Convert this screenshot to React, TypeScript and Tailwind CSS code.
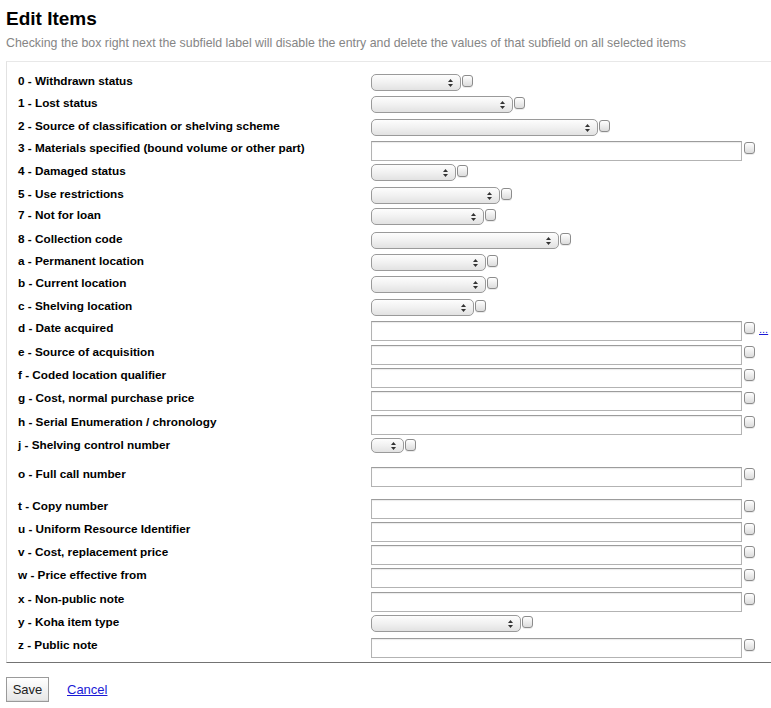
import React from "react";

type Row = {
  label: string;
  kind: "select" | "input";
  w?: string; // select width class
  h: string; // row height class
  small?: boolean;
  dots?: boolean;
};

const rows: Row[] = [
  { label: "0 - Withdrawn status", kind: "select", w: "w-[90px]", h: "h-[22px]" },
  { label: "1 - Lost status", kind: "select", w: "w-[142px]", h: "h-[23px]" },
  { label: "2 - Source of classification or shelving scheme", kind: "select", w: "w-[227px]", h: "h-[22px]" },
  { label: "3 - Materials specified (bound volume or other part)", kind: "input", h: "h-[23px]" },
  { label: "4 - Damaged status", kind: "select", w: "w-[85px]", h: "h-[23px]" },
  { label: "5 - Use restrictions", kind: "select", w: "w-[129px]", h: "h-[21px]" },
  { label: "7 - Not for loan", kind: "select", w: "w-[113px]", h: "h-[24px]" },
  { label: "8 - Collection code", kind: "select", w: "w-[188px]", h: "h-[22px]" },
  { label: "a - Permanent location", kind: "select", w: "w-[115px]", h: "h-[22px]" },
  { label: "b - Current location", kind: "select", w: "w-[115px]", h: "h-[23px]" },
  { label: "c - Shelving location", kind: "select", w: "w-[103px]", h: "h-[22px]" },
  { label: "d - Date acquired", kind: "input", h: "h-[24px]", dots: true },
  { label: "e - Source of acquisition", kind: "input", h: "h-[23px]" },
  { label: "f - Coded location qualifier", kind: "input", h: "h-[23px]" },
  { label: "g - Cost, normal purchase price", kind: "input", h: "h-[24px]" },
  { label: "h - Serial Enumeration / chronology", kind: "input", h: "h-[23px]" },
  { label: "j - Shelving control number", kind: "select", w: "w-[33px]", h: "h-[29px]", small: true },
  { label: "o - Full call number", kind: "input", h: "h-[32px]" },
  { label: "t - Copy number", kind: "input", h: "h-[23px]" },
  { label: "u - Uniform Resource Identifier", kind: "input", h: "h-[23px]" },
  { label: "v - Cost, replacement price", kind: "input", h: "h-[23px]" },
  { label: "w - Price effective from", kind: "input", h: "h-[24px]" },
  { label: "x - Non-public note", kind: "input", h: "h-[23px]" },
  { label: "y - Koha item type", kind: "select", w: "w-[150px]", h: "h-[23px]" },
  { label: "z - Public note", kind: "input", h: "h-[24px]" },
];

function Checkbox() {
  return (
    <span className="ml-[1px] mt-[1px] block w-[11px] h-[12px] rounded-[3px] border border-[#8c8c8c] bg-linear-to-b from-[#ffffff] to-[#dcdcdc] shadow-[0_1px_0_rgba(0,0,0,0.08)]" />
  );
}

function FakeSelect({ w, small }: { w?: string; small?: boolean }) {
  return (
    <div
      className={`${w} ${small ? "h-[15px]" : "h-[17px]"} relative rounded-[5px] border border-[#9a9a9a] bg-linear-to-b from-[#fdfdfd] via-[#f1f1f1] to-[#e2e2e2]`}
    >
      <svg
        className="absolute right-[7px] top-1/2 -translate-y-1/2"
        width="5"
        height="8"
        viewBox="0 0 5 8"
      >
        <path d="M2.5 0 L5 3 L0 3 Z" fill="#333" />
        <path d="M0 5 L5 5 L2.5 8 Z" fill="#333" />
      </svg>
    </div>
  );
}

export default function App() {
  return (
    <div className="min-h-screen bg-white pl-[6px] font-['Liberation_Sans',Arial,sans-serif] text-black">
      <h1 className="pt-[8px] text-[19px] leading-[22px] font-bold">Edit Items</h1>
      <p className="mt-[6px] text-[12.35px] leading-[14px] text-[#858585]">
        Checking the box right next the subfield label will disable the entry and delete the values of that subfield on all selected items
      </p>

      <div className="mt-[11px] border-t border-l border-t-[#e8e8e8] border-l-[#e2e2e2] border-b border-b-[#737373] pl-[11px] pt-[12px]">
        {rows.map((r) => (
          <div key={r.label} className={`flex items-start ${r.h}`}>
            <div className="w-[353px] shrink-0 text-[11.75px] leading-[14px] font-bold">{r.label}</div>
            {r.kind === "select" ? (
              <div className="flex items-start">
                <FakeSelect w={r.w} small={r.small} />
                <Checkbox />
              </div>
            ) : (
              <div className="flex items-start">
                <div className="w-[371px] h-[20px] border border-[#b3b3b3] border-t-[#9c9c9c] bg-white shadow-[inset_0_1px_1px_rgba(0,0,0,0.08)]" />
                <span className="ml-[1px]">
                  <Checkbox />
                </span>
                {r.dots && (
                  <a href="#" className="ml-[4px] mt-[2px] text-[11px] leading-[12px] text-[#1a1ad6] underline">
                    ...
                  </a>
                )}
              </div>
            )}
          </div>
        ))}
      </div>

      <div className="mt-[14px] flex items-center">
        <button className="w-[43px] h-[25px] border border-[#9a9a9a] bg-linear-to-b from-[#ffffff] to-[#e6e6e6] text-[13px] text-[#222] shadow-[inset_0_-1px_0_rgba(0,0,0,0.05)]">
          Save
        </button>
        <a href="#" className="ml-[18px] text-[13px] text-[#1a1ad6] underline">
          Cancel
        </a>
      </div>
    </div>
  );
}
